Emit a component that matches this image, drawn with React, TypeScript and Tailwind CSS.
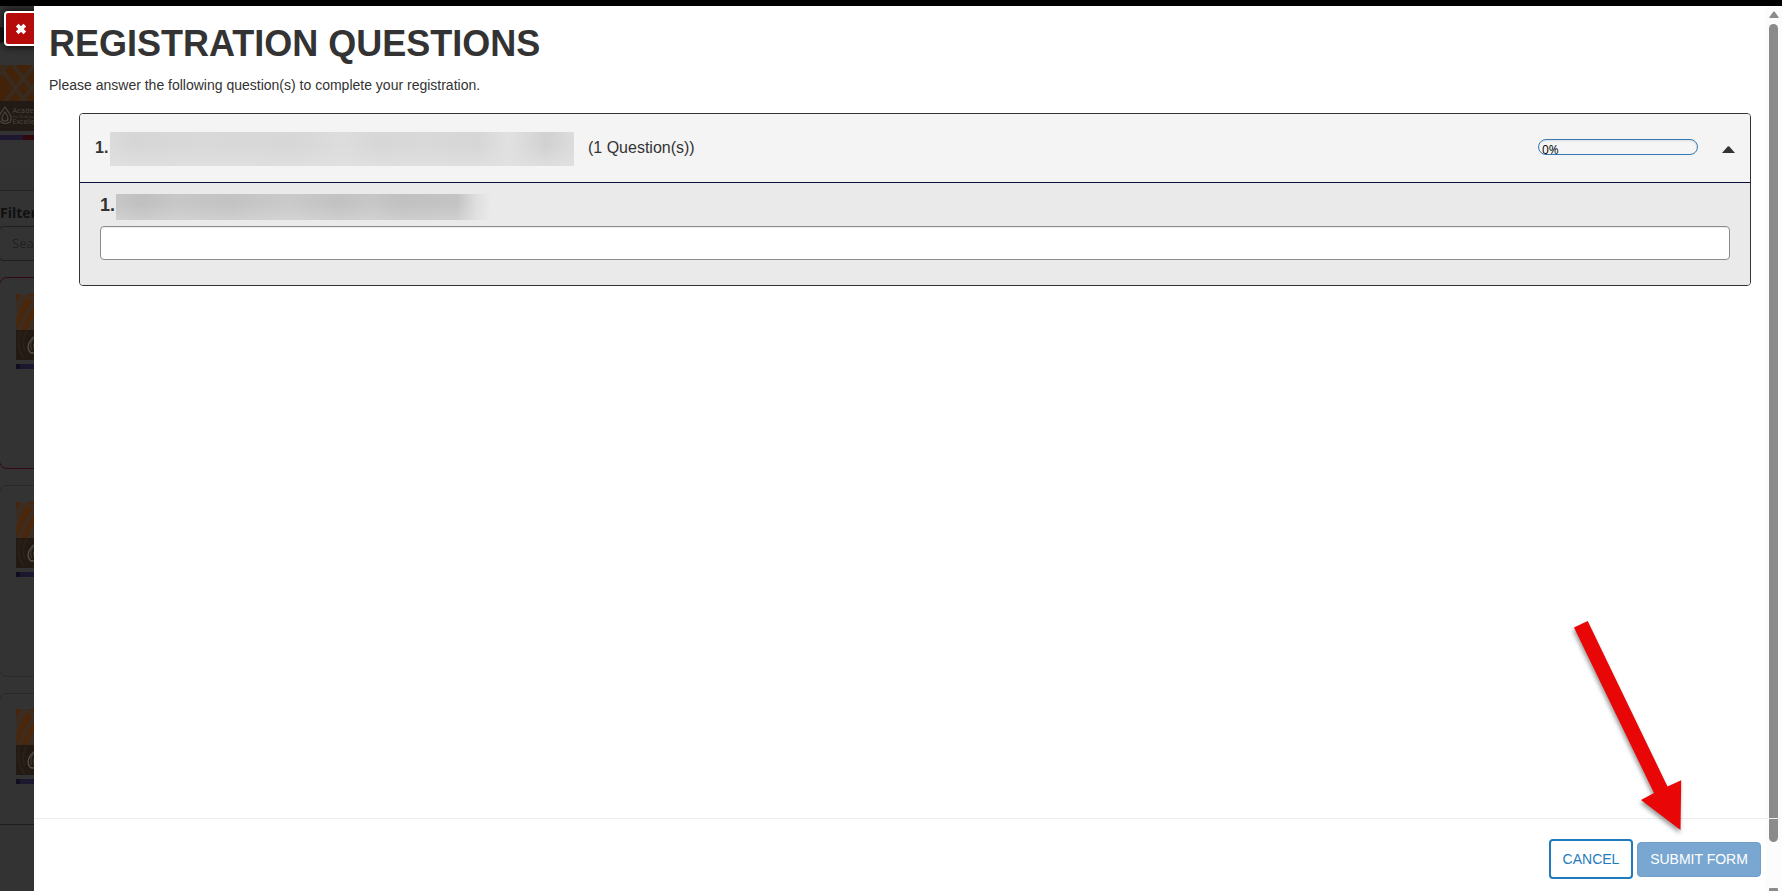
import { useState } from 'react';

function CloseIcon() {
  return (
    <svg width="12" height="12" viewBox="0 0 12 12" className="text-white">
      <path d="M2.2 2.2 9.8 9.8M9.8 2.2 2.2 9.8" stroke="currentColor" strokeWidth="3.8" />
    </svg>
  );
}

function CourseThumb() {
  return (
    <div className="w-[66px] shrink-0">
      <svg width="66" height="66" viewBox="0 0 66 66" className="block">
        <rect width="66" height="66" fill="#3d2c20" />
        <path d="M0 0h4L0 8z" fill="#48240a" />
        <path d="M1 30C2 20 6 12 11 3l5 5C10 16 6 22 4 31L0 36z" fill="#4b2609" />
        <path d="M6 36C8 28 12 20 18 13v9c-4 5-6 9-7 14z" fill="#4b2609" />
        <path d="M13 0h8v5z" fill="#48240a" />
        <rect y="36" width="66" height="30" fill="#231a13" />
        <path d="M4 38c-3 8-2 18 4 26M11 37c-4 5-5 14-2 20" fill="none" stroke="#2b201a" strokeWidth="2" />
        <path d="M19 42c-7 6-9 11-5 16 2 2 4 1 6 0" fill="none" stroke="#55504c" strokeWidth="1.3" />
        <path d="M18 45c-4 4-4 7-2 11M19 48c-2 3-2 5 0 8" fill="none" stroke="#46413d" />
      </svg>
      <div className="mt-1 flex h-[5px] bg-[#1d1830]">
        <div className="w-1 bg-[#100d1c]" />
      </div>
    </div>
  );
}

function CourseCard({ className }: { className: string }) {
  return (
    <div className={`w-[300px] shrink-0 rounded-lg border pl-4 -ml-px ${className}`}>
      <CourseThumb />
    </div>
  );
}

function DimmedPage() {
  return (
    <aside className="relative h-full w-[34px] shrink-0 overflow-hidden bg-[#333333] font-['Open_Sans','Noto_Sans',sans-serif]">
      <div className="flex w-[300px] flex-col">
        <div className="flex h-[59px] items-start pt-[21px]">
          <div className="h-4 w-[5px] rounded-r-full bg-[#161616]" />
        </div>
        <svg width="70" height="66" viewBox="0 0 70 66" className="block">
          <rect width="70" height="66" fill="#43220a" />
          <path d="M-6-6 28 40M10-4-6 16M10-4 44 40M38-4 2 40M54-4 18 40" stroke="#382b20" strokeWidth="4" fill="none" />
          <rect y="36" width="70" height="30" fill="#221a14" />
          <path d="M5 42C-1 50-3 54 1 57c3 2 6 2 9 0 3-4 0-8-5-15zM5 47c-4 5-4 9 0 9s4-4 0-9z" fill="none" stroke="#4a4541" strokeWidth="1.2" />
          <text x="12.5" y="48" fontSize="7.5" fill="#4c4743">Academy</text>
          <text x="13" y="53" fontSize="4" fill="#4c4743">for Professional</text>
          <text x="12.5" y="59" fontSize="7" fill="#4c4743">Excellence</text>
        </svg>
        <div className="mt-1 flex h-[5px]">
          <div className="w-[23px] bg-[#1d1830]" />
          <div className="w-[60px] bg-[#32080d]" />
        </div>
        <div className="h-[26px]" />
        <div className="h-[25px] border-b border-[#252525] bg-[#323232]" />
        <div className="mt-[10px] h-[25px] text-[14px] leading-6 font-bold text-[#101010]">Filter by</div>
        <div className="-ml-px h-[35px] w-[200px] rounded border border-[#1f1f1f] pl-3 text-[13px] leading-[33px] text-[#202020]">Search</div>
        <CourseCard className="mt-[16px] h-[192px] border-[#330a12] pt-[16px]" />
        <CourseCard className="mt-[16px] h-[192px] border-[#292929] pt-[16px]" />
        <CourseCard className="mt-[16px] h-[192px] border-[#292929] pt-[15px]" />
      </div>
      <div className="absolute top-[818px] left-0 h-[70px] w-full border-t border-[#1e1e1e] bg-[#333333]" />
      <button
        aria-label="Close"
        className="absolute top-[5px] left-1 flex h-[35px] w-[36px] items-center justify-start rounded-[4px] border-2 border-white bg-[#b50b0b] pl-[9px] shadow-[0_0_8px_#000]"
      >
        <CloseIcon />
      </button>
    </aside>
  );
}

function SectionHeader({ open, onToggle }: { open: boolean; onToggle: () => void }) {
  return (
    <div className="flex h-[69px] items-center border-b border-[#0b0d3d] bg-[#f4f4f4] pr-[15px] pl-[15px]" onClick={onToggle}>
      <span className="w-[15px] text-[16px] leading-[34px] font-bold">1.</span>
      <div className="mt-[2px] flex h-[34px] w-[464px] overflow-hidden bg-[linear-gradient(90deg,#dbdbdb,#d6d6d6_5%,#d9d9d9_20%,#d7d7d7_40%,#dddddd_50%,#d7d7d7_58%,#d9d9d9_68%,#d6d6d6_79%,#e1e1e1_86%,#d1d1d1_94%,#dcdcdc)]">
        <div className="h-full w-full bg-linear-to-b from-transparent from-40% to-[#e1e1e1]/80" />
      </div>
      <span className="ml-[14px] text-[16px]">(1 Question(s))</span>
      <div className="mb-[2px] ml-auto h-4 w-[160px] overflow-hidden rounded-full border border-[#337ab7] bg-[#f5f5f5] pl-[3px] font-['Open_Sans',sans-serif] text-[12px] leading-[19px] text-black shadow-[inset_0_1px_2px_rgba(0,0,0,0.1)]">
        0%
      </div>
      <svg width="13" height="7" viewBox="0 0 13 7" className={`mt-[3px] ml-[24px] ${open ? '' : 'rotate-180'}`}>
        <path d="M0 7 5.7.5Q6.5-.2 7.3.5L13 7z" fill="#333" />
      </svg>
    </div>
  );
}

function QuestionSection() {
  const [open, setOpen] = useState(true);
  const [answer, setAnswer] = useState('');

  return (
    <section className="mt-[18px] mr-[15px] ml-[30px] overflow-hidden rounded-[4px] border border-[#333333]">
      <SectionHeader open={open} onToggle={() => setOpen(!open)} />
      {open && (
        <div className="h-[102px] bg-[#eaeaea] px-5 pt-[11px]">
          <div className="flex h-[26px]">
            <span className="w-4 text-[18px] leading-[23px] font-bold">1.</span>
            <div className="h-[26px] w-[375px] bg-[linear-gradient(90deg,#c6c6c6,#c0c0c0_7%,#c7c7c7_16%,#c3c3c3_30%,#cacaca_46%,#c2c2c2_59%,#c7c7c7_68%,#c1c1c1_76%,#c4c4c4_91%,#dedede_96%,#eaeaea)]">
              <div className="h-full w-full bg-linear-to-b from-transparent from-40% to-[#eaeaea]/30" />
            </div>
          </div>
          <input
            value={answer}
            onChange={(e) => setAnswer(e.target.value)}
            className="mt-[6px] block h-[34px] w-full rounded-[4px] border border-[#8c8c8c] bg-white px-3 shadow-[inset_0_1px_1px_rgba(0,0,0,0.075)]"
          />
        </div>
      )}
    </section>
  );
}

function Scrollbar() {
  return (
    <div className="flex w-4 shrink-0 flex-col items-center overflow-hidden bg-[#fcfcfc] pt-[5px] pr-[1px]">
      <svg width="10" height="7" viewBox="0 0 10 7" className="shrink-0">
        <path d="M.3 6.2 4.3.8Q5 0 5.7.8l4 5.4q.2.8-.6.8H.9q-.8 0-.6-.8z" fill="#8b8b8b" />
      </svg>
      <div className="mt-[6px] h-[818px] w-[9px] shrink-0 rounded-full bg-[#8b8b8b]" />
      <div className="mt-[46px] h-[7px] w-[9px] shrink-0 rounded-[1px] bg-[#8b8b8b]" />
    </div>
  );
}

function PointerArrow() {
  return (
    <svg
      width="130"
      height="225"
      viewBox="1565 612 130 225"
      className="pointer-events-none absolute top-[612px] left-[1565px] drop-shadow-[-1px_3px_2px_rgba(0,0,0,0.4)]"
    >
      <path d="M1574 627.5 1587.7 621 1667.5 786.5 1681.2 780.3 1680.5 830 1641 800 1654 793z" fill="#e90606" />
    </svg>
  );
}

export default function App() {
  return (
    <div className="relative flex h-[891px] w-[1782px] flex-col overflow-hidden bg-black pt-[6px] font-['Liberation_Sans',Arial,sans-serif] text-[#333333]">
      <div className="flex min-h-0 flex-1">
        <DimmedPage />
        <div className="relative flex min-w-0 flex-1 bg-white">
          <main className="flex min-w-0 flex-1 flex-col">
            <div className="flex-1 pl-[15px]">
              <h1 className="mt-[18px] text-[36px] leading-[40px] font-bold">REGISTRATION QUESTIONS</h1>
              <p className="mt-[11px] text-[14px] leading-5">Please answer the following question(s) to complete your registration.</p>
              <QuestionSection />
            </div>
            <footer className="flex h-[73px] items-center justify-end gap-1 pt-[9px] pr-[5px]">
              <button className="h-10 w-[84px] rounded-[4px] border-2 border-[#1f7bbd] bg-white text-[14px] text-[#1f7bbd]">CANCEL</button>
              <button className="h-[35px] w-[124px] rounded-[4px] border border-[#729fc9] bg-[#7aa7d1] text-[14px] text-white">SUBMIT FORM</button>
            </footer>
          </main>
          <Scrollbar />
          <div className="absolute top-[812px] left-0 h-px w-[1746px] bg-[#eeeeee]" />
        </div>
      </div>
      <PointerArrow />
    </div>
  );
}
